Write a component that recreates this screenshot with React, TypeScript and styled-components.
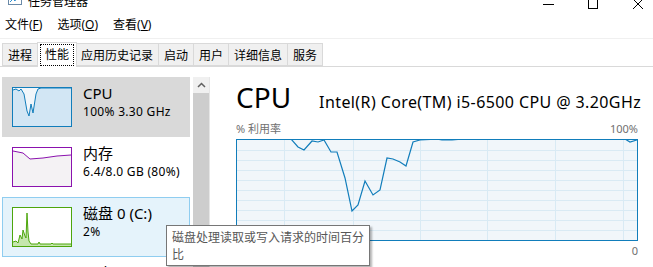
import styled, { createGlobalStyle } from "styled-components";

const GlobalStyle = createGlobalStyle`
  html, body { margin: 0; padding: 0; background: #fff; }
  body { font-family: "Noto Sans", "Noto Sans CJK SC", sans-serif; color: #000; }
`;

const tabs = ["进程", "性能", "应用历史记录", "启动", "用户", "详细信息", "服务"];

const cpuLine = "0,-1 54,-1 61,7 67,10 75,1 81,2 87,0 94,12 100,12 108,38 115,71 121,65 128,41 136,55 143,50 150,18 156,19 163,22 169,26 176,2 183,0 200,-1 205,0 215,0 225,-1 388,-1 393,2 400,0";

const gridX = [47, 116, 183, 250, 318, 386];
const gridY = [10, 20, 30, 40, 50, 60, 70, 80, 90];

export default function App() {
    return (
        <Window>
            <GlobalStyle />
            <TitleBar>
                <AppIcon viewBox="0 0 14 12">
                    <rect x="0.5" y="0.5" width="13" height="9" fill="#fff" stroke="#6a8aa8" />
                    <polyline points="2,7 5,4 7,6 9,2 12,5" fill="none" stroke="#2f8fd0" strokeWidth="1" />
                </AppIcon>
                <TitleText>任务管理器</TitleText>
                <WinButtons>
                    <svg width="11" height="10" viewBox="0 0 11 10"><line x1="0" y1="4.5" x2="11" y2="4.5" stroke="#000" /></svg>
                    <svg width="11" height="10" viewBox="0 0 11 10"><rect x="0.5" y="-2" width="9" height="10.5" fill="none" stroke="#000" /></svg>
                    <svg width="11" height="10" viewBox="0 0 11 10"><path d="M0 -1 L10 9 M10 -1 L0 9" stroke="#000" strokeWidth="1" /></svg>
                </WinButtons>
            </TitleBar>
            <MenuBar>
                <MenuItem>文件(<u>F</u>)</MenuItem>
                <MenuItem>选项(<u>O</u>)</MenuItem>
                <MenuItem>查看(<u>V</u>)</MenuItem>
            </MenuBar>
            <TabStrip>
                {tabs.map((t) => (
                    <Tab key={t} $active={t === "性能"}>
                        {t === "性能" ? <Focus>{t}</Focus> : t}
                    </Tab>
                ))}
            </TabStrip>
            <Body>
                <Sidebar>
                    <Item $state="selected">
                        <Thumb $border="#117dbb" $bg="#f1f6fa">
                            <svg width="58" height="38" viewBox="0 0 58 38">
                                <polygon points="0,2 3,1 6,3 8,1 11,6 14,23 16,28 18,16 20,25 23,6 25,1 28,0 58,0 58,38 0,38" fill="#d2e6f4" />
                                <polyline points="0,2 3,1 6,3 8,1 11,6 14,23 16,28 18,16 20,25 23,6 25,1 28,0 58,0" fill="none" stroke="#117dbb" strokeWidth="1" />
                            </svg>
                        </Thumb>
                        <ItemText>
                            <ItemName>CPU</ItemName>
                            <ItemValue>100% 3.30 GHz</ItemValue>
                        </ItemText>
                    </Item>
                    <Item>
                        <Thumb $border="#8b12ae" $bg="#fff">
                            <svg width="58" height="38" viewBox="0 0 58 38">
                                <polygon points="0,3 10,5 17,11 30,10 44,8 58,7 58,38 0,38" fill="#f4f2f4" />
                                <polyline points="0,3 10,5 17,11 30,10 44,8 58,7" fill="none" stroke="#8b12ae" strokeWidth="1" />
                            </svg>
                        </Thumb>
                        <ItemText>
                            <ItemName>内存</ItemName>
                            <ItemValue>6.4/8.0 GB (80%)</ItemValue>
                        </ItemText>
                    </Item>
                    <Item $state="hover">
                        <Thumb $border="#4da60c" $bg="#fff">
                            <svg width="58" height="38" viewBox="0 0 58 38">
                                <polygon points="0,38 0,34 3,33 5,35 7,27 9,31 10,22 12,28 13,30 14,5 15,24 16,33 18,36 25,36 26,34 27,36 38,36 39,35 40,36 58,36 58,38" fill="#c5e6ad" />
                                <polyline points="0,34 3,33 5,35 7,27 9,31 10,22 12,28 13,30 14,5 15,24 16,33 18,36 25,36 26,34 27,36 38,36 39,35 40,36 58,36" fill="none" stroke="#4da60c" strokeWidth="1" />
                            </svg>
                        </Thumb>
                        <ItemText>
                            <ItemName>磁盘 0 (C:)</ItemName>
                            <ItemValue>2%</ItemValue>
                        </ItemText>
                    </Item>
                    <Item>
                        <ThumbSpacer />
                        <ItemText>
                            <ItemName>以太网</ItemName>
                        </ItemText>
                    </Item>
                </Sidebar>
                <ScrollBar>
                    <ScrollUp>
                        <svg width="9" height="6" viewBox="0 0 9 6"><polyline points="1,5 4.5,1.5 8,5" fill="none" stroke="#606060" strokeWidth="1.5" /></svg>
                    </ScrollUp>
                    <ScrollThumb />
                </ScrollBar>
                <Main>
                    <Header>
                        <BigTitle>CPU</BigTitle>
                        <Model>Intel(R) Core(TM) i5-6500 CPU @ 3.20GHz</Model>
                    </Header>
                    <Axis>
                        <span>% 利用率</span>
                        <span>100%</span>
                    </Axis>
                    <Chart>
                        <svg width="400" height="100" viewBox="0 0 400 100">
                            {gridX.map((x) => (
                                <line key={"x" + x} x1={x + 0.5} y1="0" x2={x + 0.5} y2="100" stroke="#d9eaf4" />
                            ))}
                            {gridY.map((y) => (
                                <line key={"y" + y} x1="0" y1={y + 0.5} x2="400" y2={y + 0.5} stroke="#d9eaf4" />
                            ))}
                            <polyline points={cpuLine} fill="none" stroke="#117dbb" strokeWidth="1.2" />
                        </svg>
                    </Chart>
                    <AxisBottom>0</AxisBottom>
                </Main>
                <Tooltip>磁盘处理读取或写入请求的时间百分比</Tooltip>
            </Body>
        </Window>
    );
}

const Window = styled.div`
width: 653px;
height: 267px;
overflow: hidden;
background: #fff;
display: flex;
flex-direction: column;
`;

const TitleBar = styled.div`
flex: none;
height: 12px;
display: flex;
padding-left: 8px;
overflow: hidden;
`;

const AppIcon = styled.svg`
width: 14px;
height: 12px;
margin-top: -5px;
`;

const TitleText = styled.div`
font-size: 12px;
line-height: 16px;
margin: -6px 0 0 6px;
`;

const WinButtons = styled.div`
margin-left: auto;
display: flex;
gap: 34px;
padding-right: 9px;
`;

const MenuBar = styled.div`
flex: none;
height: 27px;
display: flex;
align-items: center;
padding-left: 5px;
gap: 15px;
border-bottom: 1px solid #f0f0f0;
box-sizing: border-box;
`;

const MenuItem = styled.span`
font-size: 12px;
line-height: 16px;
`;

const TabStrip = styled.div`
flex: none;
height: 28px;
display: flex;
align-items: flex-end;
padding-left: 2px;
border-bottom: 1px solid #d9d9d9;
box-sizing: border-box;
`;

const Tab = styled.div<{ $active?: boolean }>`
height: ${(p) => (p.$active ? "25px" : "23px")};
box-sizing: border-box;
padding: 0 ${(p) => (p.$active ? "2px" : "5px")};
margin: 0 ${(p) => (p.$active ? "-1px" : "0")} ${(p) => (p.$active ? "-1px" : "0")} -1px;
display: flex;
align-items: center;
font-size: 12px;
background: ${(p) => (p.$active ? "#fff" : "#f0f0f0")};
border: 1px solid #d9d9d9;
border-bottom: ${(p) => (p.$active ? "none" : "1px solid #d9d9d9")};
position: relative;
z-index: ${(p) => (p.$active ? 1 : 0)};
&:first-child { margin-left: 0; }
`;

const Focus = styled.span`
border: 1px dotted #000;
padding: 1px 4px;
line-height: 18px;
`;

const Body = styled.div`
flex: 1;
min-height: 0;
display: flex;
position: relative;
padding-top: 10px;
`;

const Sidebar = styled.div`
width: 188px;
padding-left: 2px;
display: flex;
flex-direction: column;
`;

const Item = styled.div<{ $state?: "selected" | "hover" }>`
height: 60px;
flex: none;
box-sizing: border-box;
display: flex;
align-items: flex-start;
gap: 11px;
background: ${(p) => (p.$state === "selected" ? "#d9d9d9" : p.$state === "hover" ? "#e5f3fb" : "transparent")};
border: ${(p) => (p.$state === "hover" ? "1px solid #8fcdf0" : "none")};
padding-top: ${(p) => (p.$state === "hover" ? "9px" : "10px")};
padding-left: ${(p) => (p.$state === "hover" ? "9px" : "10px")};
`;

const Thumb = styled.div<{ $border: string; $bg: string }>`
width: 60px;
height: 40px;
box-sizing: border-box;
border: 1px solid ${(p) => p.$border};
background: ${(p) => p.$bg};
flex: none;
& svg { display: block; }
`;

const ThumbSpacer = styled.div`
width: 60px;
flex: none;
`;

const ItemText = styled.div`
display: flex;
flex-direction: column;
margin-top: -5px;
`;

const ItemName = styled.div`
font-size: 15px;
line-height: 22px;
`;

const ItemValue = styled.div`
font-size: 12px;
line-height: 16px;
letter-spacing: 0.3px;
`;

const ScrollBar = styled.div`
width: 16px;
margin-left: 3px;
display: flex;
flex-direction: column;
border-right: 1px solid #e6e6e6;
`;

const ScrollUp = styled.div`
height: 16px;
background: #f0f0f0;
display: flex;
align-items: center;
justify-content: center;
`;

const ScrollThumb = styled.div`
flex: 1;
background: #cdcdcd;
`;

const Main = styled.div`
flex: 1;
min-width: 0;
padding: 0 15px 0 26px;
display: flex;
flex-direction: column;
`;

const Header = styled.div`
display: flex;
align-items: baseline;
gap: 28px;
height: 42px;
white-space: nowrap;
`;

const BigTitle = styled.div`
font-size: 28px;
line-height: 40px;
`;

const Model = styled.div`
font-size: 16px;
letter-spacing: 0.4px;
`;

const Axis = styled.div`
display: flex;
justify-content: space-between;
font-size: 11px;
line-height: 14px;
color: #707070;
margin-top: 3px;
`;

const Chart = styled.div`
width: 402px;
height: 102px;
box-sizing: border-box;
border: 1px solid #117dbb;
background: #f1f6fa;
margin-top: 3px;
& svg { display: block; }
`;

const AxisBottom = styled.div`
text-align: right;
font-size: 11px;
line-height: 14px;
color: #707070;
margin-top: 3px;
`;

const Tooltip = styled.div`
position: absolute;
left: 166px;
top: 158px;
width: 204px;
box-sizing: border-box;
padding: 3px 5px 2px 5px;
background: #fff;
border: 1px solid #767676;
box-shadow: 2px 2px 2px rgba(0, 0, 0, 0.3);
font-size: 12px;
line-height: 17px;
color: #575757;
z-index: 5;
`;
